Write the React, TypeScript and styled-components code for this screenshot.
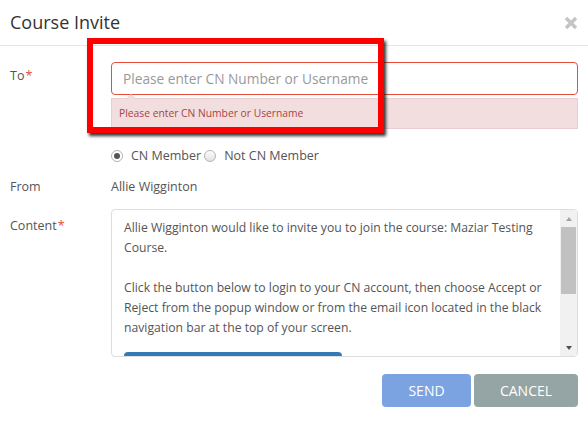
import React, { useState } from 'react';
import styled, { createGlobalStyle } from 'styled-components';

const GlobalStyle = createGlobalStyle`
  html, body {
    margin: 0;
    padding: 0;
    background: #fff;
  }
  body {
    font-family: 'Open Sans', 'Segoe UI', sans-serif;
    color: #555;
  }
`;

const Modal = styled.div`
  position: relative;
  width: 588px;
  height: 423px;
  background: #fff;
  box-sizing: border-box;
`;

const Header = styled.div`
  height: 46px;
  box-sizing: border-box;
  border-bottom: 1px solid #e5e5e5;
  display: flex;
  align-items: center;
  justify-content: space-between;
  padding: 0 10px 2px 10px;
`;

const Title = styled.h4`
  margin: 0;
  font-size: 18px;
  font-weight: 400;
  color: #333;
`;

const CloseButton = styled.button`
  border: 0;
  background: none;
  padding: 0;
  margin-top: 2px;
  width: 14px;
  height: 14px;
  display: flex;
  cursor: pointer;
`;

const Body = styled.div`
  padding: 16px 10px 0 10px;
  display: flex;
  flex-direction: column;
`;

const Row = styled.div<{ $gap?: number }>`
  display: grid;
  grid-template-columns: 101px 1fr;
  margin-top: ${p => p.$gap ?? 0}px;
`;

const Label = styled.div<{ $top?: number }>`
  font-size: 12.5px;
  color: #555;
  padding-top: ${p => p.$top ?? 0}px;
  line-height: 18px;
`;

const Required = styled.span`
  color: #e74c3c;
  margin-left: 1px;
`;

const Field = styled.div`
  display: flex;
  flex-direction: column;
  position: relative;
`;

const Input = styled.input`
  height: 33px;
  box-sizing: border-box;
  border: 1px solid #e74c3c;
  border-radius: 4px;
  padding: 0 11px;
  font-family: inherit;
  font-size: 13.7px;
  color: #555;
  outline: none;
  &::placeholder {
    color: #999;
  }
`;

const ErrorBox = styled.div`
  position: relative;
  margin-top: 3px;
  height: 31px;
  box-sizing: border-box;
  background: #f2dede;
  border: 1px solid #ebccd1;
  color: #a94442;
  font-size: 10.3px;
  display: flex;
  align-items: center;
  padding: 0 7px 1px;

  &::before {
    content: '';
    position: absolute;
    left: 14px;
    top: -5px;
    border-left: 5px solid transparent;
    border-right: 5px solid transparent;
    border-bottom: 5px solid #ebccd1;
  }
  &::after {
    content: '';
    position: absolute;
    left: 15px;
    top: -4px;
    border-left: 4px solid transparent;
    border-right: 4px solid transparent;
    border-bottom: 4px solid #f2dede;
  }
`;

const RadioGroup = styled.div`
  display: flex;
  align-items: center;
  font-size: 12.5px;
  color: #555;
`;

const RadioOption = styled.label<{ $first?: boolean }>`
  display: flex;
  align-items: center;
  margin-left: ${p => (p.$first ? 0 : 3)}px;
  cursor: pointer;
`;

const RadioDot = styled.span<{ $checked: boolean }>`
  width: 12px;
  height: 12px;
  box-sizing: border-box;
  border-radius: 50%;
  border: 1px solid #b5b5b5;
  background: ${p => (p.$checked ? '#fff' : 'linear-gradient(#fdfdfd, #e2e2e2)')};
  margin-right: 8px;
  display: flex;
  align-items: center;
  justify-content: center;

  &::after {
    content: '';
    width: 6px;
    height: 6px;
    border-radius: 50%;
    background: ${p => (p.$checked ? '#555' : 'transparent')};
  }
`;

const Value = styled.div`
  font-size: 12.5px;
  color: #555;
  line-height: 18px;
`;

const TextArea = styled.div`
  height: 148px;
  box-sizing: border-box;
  border: 1px solid #ddd;
  border-radius: 4px;
  display: flex;
  overflow: hidden;
`;

const TextContent = styled.div`
  flex: 1;
  padding: 8px 8px 0 12px;
  font-size: 12.2px;
  line-height: 20px;
  color: #555;
  overflow: hidden;

  p {
    margin: 0 0 20px 0;
  }
`;

const InviteButton = styled.div`
  width: 218px;
  height: 30px;
  background: #337ab7;
  border-radius: 4px;
  margin-top: -6px;
`;

const Scrollbar = styled.div`
  width: 17px;
  background: #f1f1f1;
  display: flex;
  flex-direction: column;
  align-items: center;
  justify-content: space-between;
`;

const ScrollArrow = styled.div<{ $up?: boolean }>`
  height: 17px;
  width: 17px;
  display: flex;
  align-items: center;
  justify-content: center;

  &::after {
    content: '';
    border-left: 3.5px solid transparent;
    border-right: 3.5px solid transparent;
    ${p => (p.$up ? 'border-bottom: 4px solid #a3a3a3;' : 'border-top: 4px solid #505050;')}
  }
`;

const ScrollThumb = styled.div`
  width: 15px;
  height: 67px;
  background: #c1c1c1;
  margin-bottom: auto;
`;

const Footer = styled.div`
  display: flex;
  justify-content: flex-end;
  gap: 3px;
  padding-top: 17px;
`;

const Button = styled.button<{ $variant: 'send' | 'cancel' }>`
  height: 33px;
  width: ${p => (p.$variant === 'send' ? '89px' : '104px')};
  border: 0;
  border-radius: 4px;
  background: ${p => (p.$variant === 'send' ? '#7ba3e2' : '#95a5a5')};
  color: #fff;
  font-family: inherit;
  font-size: 14px;
  text-transform: uppercase;
  cursor: pointer;
`;

const Annotation = styled.div`
  position: absolute;
  left: 87px;
  top: 38px;
  width: 297px;
  height: 95px;
  box-sizing: border-box;
  border: 6px solid #f00;
  box-shadow: 2px 3px 3px rgba(0, 0, 0, 0.8);
  pointer-events: none;
`;

const CloseIcon = () => (
  <svg width="14" height="14" viewBox="0 0 14 14">
    <path d="M2 2 L12 12 M12 2 L2 12" stroke="#c4c4c4" strokeWidth="3.4" strokeLinecap="butt" />
  </svg>
);

const App: React.FC = () => {
  const [member, setMember] = useState(true);

  return (
    <Modal>
      <GlobalStyle />
      <Header>
        <Title>Course Invite</Title>
        <CloseButton aria-label="Close">
          <CloseIcon />
        </CloseButton>
      </Header>
      <Body>
        <Row>
          <Label $top={5}>
            To<Required>*</Required>
          </Label>
          <Field>
            <Input placeholder="Please enter CN Number or Username" />
            <ErrorBox>Please enter CN Number or Username</ErrorBox>
          </Field>
        </Row>
        <Row $gap={18}>
          <div />
          <RadioGroup>
            <RadioOption $first onClick={() => setMember(true)}>
              <RadioDot $checked={member} />
              CN Member
            </RadioOption>
            <RadioOption onClick={() => setMember(false)}>
              <RadioDot $checked={!member} />
              Not CN Member
            </RadioOption>
          </RadioGroup>
        </Row>
        <Row $gap={14}>
          <Label>From</Label>
          <Value>Allie Wigginton</Value>
        </Row>
        <Row $gap={13}>
          <Label $top={8}>
            Content<Required>*</Required>
          </Label>
          <TextArea>
            <TextContent>
              <p>Allie Wigginton would like to invite you to join the course: Maziar Testing Course.</p>
              <p>
                Click the button below to login to your CN account, then choose Accept or Reject from the popup
                window or from the email icon located in the black navigation bar at the top of your screen.
              </p>
              <InviteButton />
            </TextContent>
            <Scrollbar>
              <ScrollArrow $up />
              <ScrollThumb />
              <ScrollArrow />
            </Scrollbar>
          </TextArea>
        </Row>
        <Footer>
          <Button $variant="send">Send</Button>
          <Button $variant="cancel">Cancel</Button>
        </Footer>
      </Body>
      <Annotation />
    </Modal>
  );
};

export default App;
